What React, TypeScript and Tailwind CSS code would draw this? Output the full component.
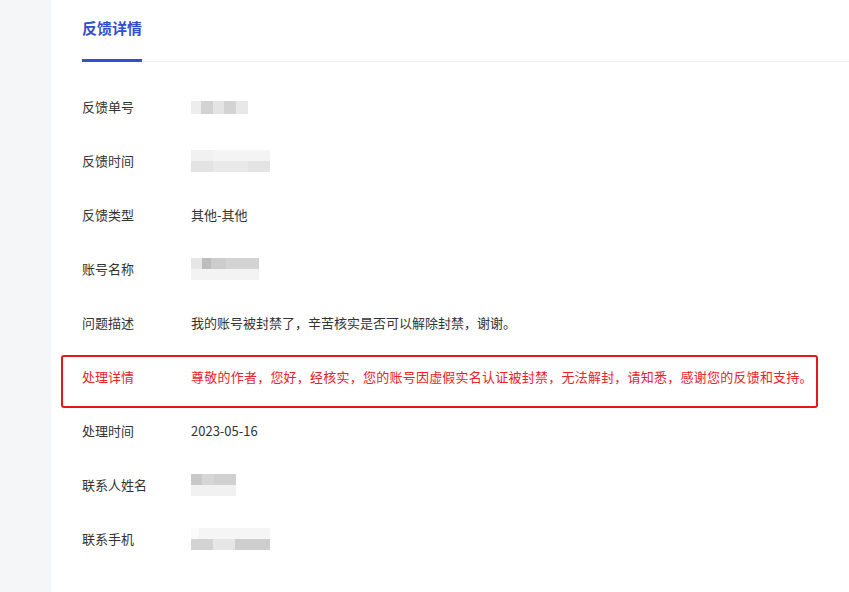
type Cell = { w: number; c: string };

// pixelated "masked" value, rows of gray cells
function Masked({ rows, h }: { rows: Cell[][]; h: number }) {
  return (
    <div className="flex flex-col blur-[0.5px]">
      {rows.map((r, i) => (
        <div key={i} className="flex">
          {r.map((cell, j) => (
            <div key={j} style={{ width: cell.w, height: h, background: cell.c }} />
          ))}
        </div>
      ))}
    </div>
  );
}

const rows: { label: string; value: React.ReactNode; highlight?: boolean }[] = [
  {
    label: "反馈单号",
    value: (
      <Masked
        h={13}
        rows={[
          [
            { w: 10, c: "#ededed" },
            { w: 12, c: "#d2d2d2" },
            { w: 11, c: "#e4e4e4" },
            { w: 12, c: "#d3d3d3" },
            { w: 12, c: "#e8e8e8" },
          ],
        ]}
      />
    ),
  },
  {
    label: "反馈时间",
    value: (
      <Masked
        h={11}
        rows={[
          [
            { w: 22, c: "#f1f1f1" },
            { w: 57, c: "#f4f4f4" },
          ],
          [
            { w: 22, c: "#e3e3e3" },
            { w: 35, c: "#e9e9e9" },
            { w: 22, c: "#e4e4e4" },
          ],
        ]}
      />
    ),
  },
  { label: "反馈类型", value: "其他-其他" },
  {
    label: "账号名称",
    value: (
      <Masked
        h={11}
        rows={[
          [
            { w: 11, c: "#e6e6e6" },
            { w: 9, c: "#bdbdbd" },
            { w: 15, c: "#cdcdcd" },
            { w: 33, c: "#d3d3d3" },
          ],
          [{ w: 68, c: "#f3f3f3" }],
        ]}
      />
    ),
  },
  { label: "问题描述", value: "我的账号被封禁了，辛苦核实是否可以解除封禁，谢谢。" },
  {
    label: "处理详情",
    value: "尊敬的作者，您好，经核实，您的账号因虚假实名认证被封禁，无法解封，请知悉，感谢您的反馈和支持。",
    highlight: true,
  },
  { label: "处理时间", value: "2023-05-16" },
  {
    label: "联系人姓名",
    value: (
      <Masked
        h={11}
        rows={[
          [
            { w: 11, c: "#c9c9c9" },
            { w: 12, c: "#d6d6d6" },
            { w: 22, c: "#d1d1d1" },
          ],
          [{ w: 45, c: "#f1f1f1" }],
        ]}
      />
    ),
  },
  {
    label: "联系手机",
    value: (
      <Masked
        h={11}
        rows={[
          [
            { w: 8, c: "#fafafa" },
            { w: 71, c: "#f5f5f5" },
          ],
          [
            { w: 22, c: "#d3d3d3" },
            { w: 22, c: "#e6e6e6" },
            { w: 35, c: "#cecece" },
          ],
        ]}
      />
    ),
  },
];

export default function App() {
  return (
    <div
      className="flex h-[592px] w-[849px] overflow-hidden bg-white"
      style={{ fontFamily: '"Noto Sans CJK SC", "Noto Sans", sans-serif' }}
    >
      <aside className="w-[51px] shrink-0 bg-[#f5f6f8]" />
      <main className="flex-1 pl-[31px] pt-[19px]">
        <div className="flex border-b border-[#eef0f3]">
          <div className="-mb-px border-b-[3px] border-[#3350cc] pb-[22px] text-[15px] font-bold leading-[18px] text-[#3350cc]">
            反馈详情
          </div>
        </div>

        <div className="mt-[18px] flex flex-col">
          {rows.map((r) => (
            <div
              key={r.label}
              className={`relative flex h-[54px] items-center text-[13px] ${
                r.highlight ? "text-[#e8232b]" : "text-[#333333]"
              }`}
            >
              <span className="w-[109px] shrink-0">{r.label}</span>
              <div className={`whitespace-nowrap ${r.highlight ? "tracking-[0.23px]" : ""}`}>{r.value}</div>
              {r.highlight && (
                <div className="pointer-events-none absolute -left-[21px] right-[31px] top-[5px] -bottom-[4px] rounded-[3px] border-[2.5px] border-[#e8161c]" />
              )}
            </div>
          ))}
        </div>
      </main>
    </div>
  );
}
